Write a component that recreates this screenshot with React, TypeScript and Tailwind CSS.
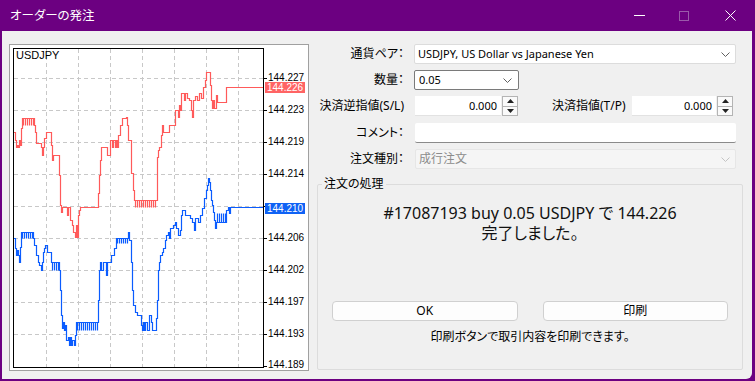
import React from 'react';

type Pt = [number, number];

const ui = "font-['Noto_Sans','Noto_Sans_CJK_JP',sans-serif] [font-feature-settings:'palt']";

// spiky comb of ticks between base and tip
const comb = (x0: number, x1: number, base: number, tip: number): Pt[] => {
  const pts: Pt[] = [];
  for (let x = x0; x <= x1; x += 2) pts.push([x, tip], [x, base]);
  return pts;
};

const stepPath = (start: Pt, pts: Pt[]) => {
  let d = `M${start[0] + 0.5} ${start[1] + 0.5}`;
  for (const [x, y] of pts) d += `H${x + 0.5}V${y + 0.5}`;
  return d;
};

const askPts: Pt[] = [
  [14, 132], [15, 140], [16, 147], [17, 145], [18, 147], [19, 140], [20, 145], [21, 128], [22, 118],
  ...comb(23, 33, 118, 125),
  [34, 125], [35, 132], [36, 143], [40, 143], [41, 147], [42, 155], [43, 147], [44, 138], [46, 132],
  [50, 132], [51, 145], [52, 160], [53, 155], [58, 155], [59, 175], [60, 205], [61, 212], [62, 207],
  [65, 207], [67, 215], [68, 207], [70, 220], [72, 225], [73, 232], [75, 237], [76, 225], [77, 237],
  [78, 215], [79, 210], [80, 207], [97, 207], [98, 193], [99, 175], [100, 160], [101, 147], [106, 147],
  [107, 155], [109, 155], [110, 140], [112, 147], [113, 140], [115, 147], [116, 140], [117, 147],
  [118, 135], [120, 125], [122, 118], [126, 117], [127, 125], [128, 140], [131, 173], [133, 190], [134, 200],
  ...comb(135, 156, 200, 207),
  [157, 157], [158, 150], [159, 147], [161, 135], [162, 125], [163, 132], [168, 132], [169, 125],
  [174, 125], [175, 110], [177, 110], [178, 117], [179, 105], [180, 110], [181, 93], [183, 93],
  [184, 100], [185, 93], [187, 98], [189, 100], [191, 110], [192, 117], [193, 100], [195, 96],
  [197, 100], [199, 93], [201, 98], [203, 87], [205, 80], [206, 72], [209, 72], [210, 85], [211, 100],
  [212, 108], [213, 100], [214, 108], [216, 95], [217, 102], [225, 102], [226, 87], [263, 87],
];

const bidPts: Pt[] = [
  [14, 238], [15, 248], [16, 255], [17, 250], [18, 255], [19, 262], [20, 247], [21, 232],
  ...comb(22, 32, 232, 238),
  [33, 238], [34, 245], [36, 255], [38, 262], [39, 265], [41, 270], [42, 262], [43, 252], [44, 248],
  [45, 245], [47, 252], [50, 252], [51, 262],
  ...comb(52, 58, 262, 270),
  [59, 270], [60, 290], [61, 315], [62, 328], [63, 322], [64, 330], [65, 325], [66, 340], [68, 337],
  [69, 345], [70, 337], [71, 345], [72, 340], [74, 345], [75, 335], [76, 322],
  ...comb(77, 97, 322, 330),
  [98, 300], [99, 270], [100, 262], [101, 270], [103, 262], [105, 262], [106, 275], [107, 262],
  [110, 262], [111, 255], [113, 255], [114, 248], [116, 238],
  ...comb(117, 127, 238, 243),
  [128, 232], [129, 240], [131, 262], [132, 290], [133, 305], [135, 312], [137, 315], [140, 315],
  [141, 325], [142, 330], [143, 322], [144, 330], [145, 322], [147, 330], [149, 315], [151, 322],
  [152, 330], [155, 330], [156, 318], [157, 300], [158, 270], [159, 262], [160, 255], [162, 252],
  [163, 248], [165, 240], [166, 235], [168, 232], [169, 238], [170, 228], [173, 225], [175, 222],
  [176, 228], [178, 235], [180, 230], [181, 215], [182, 210], [184, 210], [185, 215], [188, 215],
  [190, 218], [192, 222], [194, 230], [195, 218], [197, 218], [198, 222], [200, 215], [202, 208],
  [204, 198], [206, 190], [207, 185], [208, 178], [209, 182], [210, 190], [211, 200], [212, 205],
  [213, 212], [214, 220], [215, 228], [216, 222],
  ...comb(217, 225, 222, 213),
  [226, 210], [228, 207], [229, 213], [230, 207], [263, 207],
];

// price scale; 144.210 sits under the bid marker, so it is not printed twice
const levels: [number, string][] = [
  [78, '144.227'], [110, '144.223'], [142, '144.219'], [174, '144.214'], [206, ''],
  [238, '144.206'], [270, '144.202'], [302, '144.197'], [334, '144.193'], [366, '144.189'],
];
const vLines = [46, 78, 110, 142, 174, 206, 238];

function Chart() {
  return (
    <div className="w-[300px] h-[327px] border border-[#a0a0a0] bg-white shrink-0">
      <svg width="298" height="325" viewBox="10 45 298 325" className="block" fontFamily="'Liberation Sans', Arial, sans-serif" fontSize="10">
        {levels.slice(0, 9).map(([y]) => (
          <line key={y} x1="14" x2="263" y1={y + 0.5} y2={y + 0.5} stroke="#c8c8c8" strokeDasharray="4 3" />
        ))}
        {vLines.map((x) => (
          <line key={x} x1={x + 0.5} x2={x + 0.5} y1="49" y2="367" stroke="#c8c8c8" strokeDasharray="4 3" />
        ))}
        <path d={stepPath([13, 132], askPts)} fill="none" stroke="#ff5a5a" strokeWidth="1.2" />
        <path d={stepPath([13, 238], bidPts)} fill="none" stroke="#0a5cff" strokeWidth="1.2" />
        <rect x="13.5" y="48.5" width="250" height="319" fill="none" stroke="#000" />
        {levels.map(([y, v]) => (
          <g key={y}>
            <line x1="264" x2="267" y1={y + 0.5} y2={y + 0.5} stroke="#000" />
            {v && <text x="268" y={y === 366 ? 368 : y + 3} fill="#000">{v}</text>}
          </g>
        ))}
        <rect x="265" y="82" width="40" height="11" fill="#ff6464" />
        <text x="267" y="91" fill="#fff">144.226</text>
        <rect x="265" y="203" width="40" height="11" fill="#0f62f5" />
        <text x="267" y="212" fill="#fff">144.210</text>
        <text x="16" y="59" fill="#000" fontSize="11">USDJPY</text>
      </svg>
    </div>
  );
}

function Chevron({ color = '#606060' }: { color?: string }) {
  return (
    <svg width="9" height="5" viewBox="0 0 9 5" className="shrink-0">
      <polyline points="0.5,0.5 4.5,4.5 8.5,0.5" fill="none" stroke={color} />
    </svg>
  );
}

function Spinner() {
  return (
    <div className="ml-[1px] w-[16px] h-[20px] border border-[#b4b4b4] bg-[#fafafa] flex flex-col">
      <div className="flex-1 flex items-center justify-center border-b border-[#b4b4b4]">
        <svg width="7" height="4" viewBox="0 0 7 4"><polygon points="3.5,0 7,4 0,4" fill="#222" /></svg>
      </div>
      <div className="flex-1 flex items-center justify-center">
        <svg width="7" height="4" viewBox="0 0 7 4"><polygon points="0,0 7,0 3.5,4" fill="#222" /></svg>
      </div>
    </div>
  );
}

function Label({ children }: { children: React.ReactNode }) {
  return <div className="w-[88px] shrink-0 text-right pr-[1px] mr-[9px] whitespace-nowrap">{children}</div>;
}

export default function App() {
  return (
    <div className={`w-[755px] h-[381px] bg-[#6c0081] flex flex-col overflow-hidden text-[12px] leading-[16px] text-[#000] ${ui}`}>
      <div className="h-[31px] flex items-center shrink-0">
        <div className="pl-[10px] text-white text-[12.5px] flex-1">オーダーの発注</div>
        <svg width="11" height="1" className="mr-[34px]"><line x1="0" x2="11" y1="0.5" y2="0.5" stroke="#fff" /></svg>
        <svg width="10" height="10" className="mr-[36px]"><rect x="0.5" y="0.5" width="9" height="9" fill="none" stroke="#9a5aaa" /></svg>
        <svg width="11" height="11" className="mr-[19px]">
          <path d="M0.5 0.5L10.5 10.5M10.5 0.5L0.5 10.5" stroke="#fff" />
        </svg>
      </div>
      <div className="flex-1 ml-[2px] mr-[3px] mb-[2px] bg-[#f0f0f0] rounded-br-[6px] flex pl-[7px] pt-[13px] pb-[8px]">
        <Chart />
        <div className="ml-[8px] w-[426px] shrink-0 flex flex-col">
          <div className="flex items-center h-[20px] pr-[7px]">
            <Label>通貨ペア：</Label>
            <div className="flex-1 h-[20px] bg-white border border-[#dcdcdc] rounded-[2px] flex items-center justify-between pl-[3px] pr-[5px]">
              <span className="text-[11px]">USDJPY, US Dollar vs Japanese Yen</span>
              <Chevron />
            </div>
          </div>
          <div className="flex items-center h-[20px] mt-[6px]">
            <Label>数量：</Label>
            <div className="w-[105px] h-[20px] bg-white border border-[#7a7a7a] rounded-[2px] flex items-center justify-between pl-[4px] pr-[6px]">
              <span className="text-[11px]">0.05</span>
              <Chevron />
            </div>
          </div>
          <div className="flex items-center h-[20px] mt-[6px]">
            <Label>決済逆指値(S/L)</Label>
            <div className="ml-[1px] w-[86px] h-[20px] bg-white border-b border-[#e2e2e2] flex items-center justify-end pr-[4px] text-[11px]">0.000</div>
            <Spinner />
            <div className="ml-[34px] w-[80px] whitespace-nowrap">決済指値(T/P)</div>
            <div className="w-[84px] h-[20px] bg-white border-b border-[#e2e2e2] flex items-center justify-end pr-[4px] text-[11px]">0.000</div>
            <Spinner />
          </div>
          <div className="flex items-center h-[20px] mt-[7px] pr-[7px]">
            <Label>コメント：</Label>
            <div className="ml-[1px] flex-1 h-[20px] bg-white border-b border-[#8a8a8a] rounded-[2px]" />
          </div>
          <div className="flex items-center h-[20px] mt-[6px] pr-[7px]">
            <Label>注文種別：</Label>
            <div className="ml-[1px] flex-1 h-[20px] bg-[#f5f5f5] border border-[#e6e6e6] rounded-[2px] flex items-center justify-between pl-[3px] pr-[5px] text-[#8c8c8c]">
              <span>成行注文</span>
              <Chevron color="#c4c4c4" />
            </div>
          </div>
          <fieldset className="mt-[7px] border border-[#dcdcdc] rounded-[2px] min-w-0">
            <legend className="ml-[4px] px-[2px] leading-[16px]">注文の処理</legend>
            <div className="h-[177px] flex flex-col items-center">
              <div className="mt-[11px] text-[16px] leading-[20px] text-center text-[#111]">
                <div>#17087193 buy 0.05 USDJPY で 144.226</div>
                <div>完了しました。</div>
              </div>
              <div className="mt-[58px] w-full px-[14px] grid grid-cols-2 gap-[25px]">
                <button className="h-[20px] bg-[#fdfdfd] border border-[#d0d0d0] rounded-[4px] text-[12px]">OK</button>
                <button className="h-[20px] bg-[#fdfdfd] border border-[#d0d0d0] rounded-[4px] text-[12px]">印刷</button>
              </div>
              <div className="mt-[8px]">印刷ボタンで取引内容を印刷できます。</div>
            </div>
          </fieldset>
        </div>
      </div>
    </div>
  );
}
